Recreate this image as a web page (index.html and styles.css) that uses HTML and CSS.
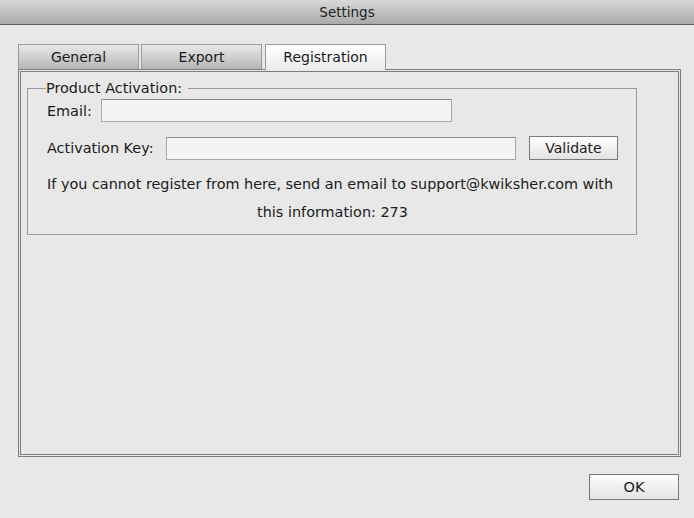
FILE: index.html
```html
<!DOCTYPE html>
<html>
<head>
<meta charset="utf-8">
<link rel="stylesheet" href="styles.css">
</head>
<body>
<div class="window">
  <div class="titlebar">Settings</div>
  <div class="content">
    <div class="tabs">
      <div class="tab">General</div>
      <div class="tab">Export</div>
      <div class="tab active">Registration</div>
    </div>
    <div class="panel">
      <fieldset class="group">
        <legend>Product Activation:</legend>
        <div class="row email-row">
          <label>Email:</label>
          <div class="input email-input"></div>
        </div>
        <div class="row key-row">
          <label>Activation Key:</label>
          <div class="input key-input"></div>
          <div class="button validate">Validate</div>
        </div>
        <p class="info">If you cannot register from here, send an email to support@kwiksher.com with</p>
        <p class="info center">this information: 273</p>
      </fieldset>
    </div>
    <div class="footer">
      <div class="button ok">OK</div>
    </div>
  </div>
</div>
</body>
</html>
```
FILE: styles.css
```css
* { box-sizing: border-box; }
html, body { margin: 0; padding: 0; }
body {
  width: 694px;
  height: 518px;
  background: #e8e8e8;
  font-family: "DejaVu Sans", "Liberation Sans", sans-serif;
  font-size: 14px;
  color: #1a1a1a;
  overflow: hidden;
}
.window { width: 694px; height: 518px; display: flex; flex-direction: column; }
.titlebar {
  height: 25px;
  background: linear-gradient(#d9d9d9, #a9a9a9);
  border-bottom: 1px solid #5a5a5a;
  text-align: center;
  line-height: 25px;
  font-size: 13.5px;
  color: #222;
}
.content { flex: 1; padding: 19px 12px 0 18px; display: flex; flex-direction: column; }
.tabs { display: flex; gap: 2px; height: 25px; padding-left: 0; }
.tab {
  width: 121px;
  height: 25px;
  border: 1px solid #9a9a9a;
  border-bottom: none;
  background: linear-gradient(#e9e9e9, #b5b5b5);
  text-align: center;
  line-height: 24px;
  font-size: 14px;
}
.tab.active {
  width: 121px;
  margin-left: 1px;
  background: linear-gradient(#ffffff, #ececec);
  height: 26px;
  position: relative;
  z-index: 1;
}
.panel {
  width: 663px;
  height: 388px;
  border: 3px double #7d7d7d;
  padding: 8px 41px 0 6px;
}
.group {
  margin: 0;
  border: 1px solid #9a9a9a;
  padding: 0 0 12px 19px;
  height: 155px;
}
.group legend {
  padding: 0 6px 0 0;
  margin-left: -1px;
  font-size: 14.4px;
  line-height: 16px;
}
.row { display: flex; align-items: center; }
.email-row { margin-top: 3px; }
.email-row label { width: 54px; font-size: 14.4px; }
.email-input { width: 351px; }
.key-row { margin-top: 14px; }
.key-row label { width: 119px; font-size: 14.4px; }
.key-input { width: 350px; }
.input {
  height: 23px;
  background: #f4f4f4;
  border: 1px solid #a8a8a8;
  border-top-color: #8c8c8c;
}
.button {
  background: linear-gradient(#ffffff, #e2e2e2);
  border: 1px solid #7a7a7a;
  text-align: center;
  font-size: 14px;
}
.validate { width: 89px; height: 24px; line-height: 22px; margin-left: 13px; }
.info { margin: 17px 0 0 0; font-size: 14.4px; line-height: 14px; white-space: nowrap; }
.info.center { text-align: center; margin-top: 14px; padding-right: 18px; }
.footer { display: flex; justify-content: flex-end; padding: 17px 3px 0 0; }
.ok { width: 90px; height: 26px; line-height: 24px; font-size: 14.5px; }
```
